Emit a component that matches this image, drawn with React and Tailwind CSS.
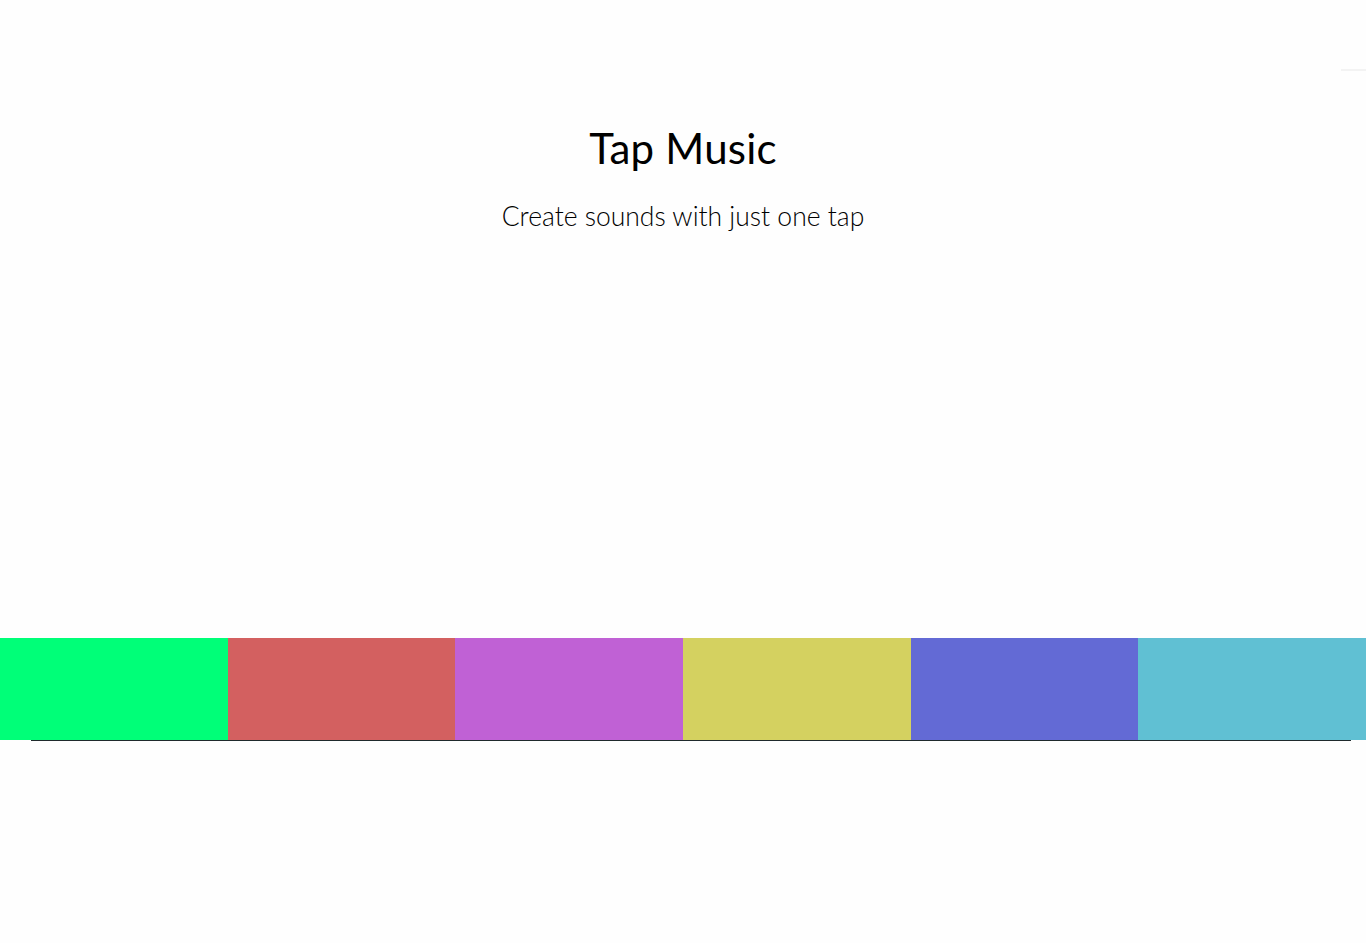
const pads = [
  { name: 'green', color: 'bg-[#00ff78]' },
  { name: 'red', color: 'bg-[#d36060]' },
  { name: 'purple', color: 'bg-[#c061d5]' },
  { name: 'yellow', color: 'bg-[#d4d160]' },
  { name: 'blue', color: 'bg-[#636ad5]' },
  { name: 'cyan', color: 'bg-[#60c0d3]' },
];

const App = () => {
  return (
    <div className="min-h-[943px] bg-[#fefefe] font-['Lato','Open_Sans',sans-serif] text-black">
      {/* top-right hairline */}
      <div className="flex justify-end pt-[69px]">
        <div className="w-[25px] h-[2px] bg-[#f3f3f3]" />
      </div>

      <header className="flex flex-col items-center">
        <h1 className="mt-[52px] text-[42px] leading-[50px] font-normal tracking-[0.2px]">Tap Music</h1>
        <p className="mt-[28px] text-[26.5px] leading-[30px] font-light">Create sounds with just one tap</p>
      </header>

      {/* Pads */}
      <div className="mt-[407px] grid grid-cols-6 h-[102px]">
        {pads.map((pad) => (
          <div key={pad.name} className={pad.color} />
        ))}
      </div>
      <div className="ml-[31px] mr-[15px] h-px bg-[#1f2a2c]" />
    </div>
  );
};

export default App;
